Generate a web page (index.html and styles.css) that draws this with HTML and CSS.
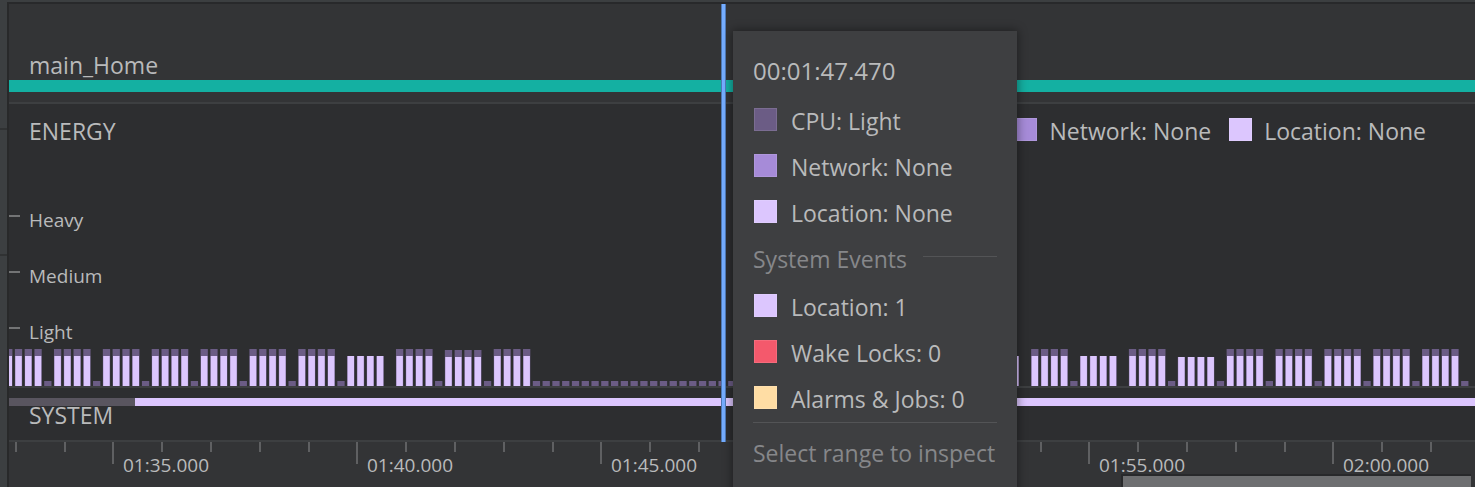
FILE: index.html
```html
<!DOCTYPE html>
<html lang="en">
<head>
<meta charset="utf-8">
<title>Energy profiler</title>
<link rel="stylesheet" href="styles.css">
</head>
<body>
<div class="profiler">
  <aside class="sessions"><div class="session"></div><div class="session"></div></aside>
  <main class="stage">
    <section class="events">
      <h2 class="label">main_Home</h2>
      <div class="activity"></div>
    </section>
    <section class="energy">
      <svg class="chart" id="chart" role="img" aria-label="Energy usage"></svg>
      <div class="overlay">
        <header class="head">
          <h2 class="label">ENERGY</h2>
          <ul class="legend">
            <li class="key"><span class="swatch network"></span>Network: None</li>
            <li class="key"><span class="swatch location"></span>Location: None</li>
          </ul>
        </header>
        <ul class="axis">
          <li class="level">Heavy</li>
          <li class="level">Medium</li>
          <li class="level">Light</li>
        </ul>
      </div>
    </section>
    <section class="system">
      <div class="track"><span class="idle"></span><span class="busy"></span></div>
      <h2 class="label">SYSTEM</h2>
    </section>
    <footer class="ruler">
      <svg class="ticks" id="ticks" aria-hidden="true"></svg>
      <div class="times" id="times"></div>
    </footer>
    <div class="cursor"></div>
    <div class="thumb"></div>
    <div class="tooltip" role="tooltip">
      <p class="stamp">00:01:47.470</p>
      <ul class="rows">
        <li class="row"><span class="swatch cpu"></span>CPU: Light</li>
        <li class="row"><span class="swatch network"></span>Network: None</li>
        <li class="row"><span class="swatch location"></span>Location: None</li>
      </ul>
      <h3 class="group">System Events</h3>
      <ul class="rows">
        <li class="row"><span class="swatch location"></span>Location: 1</li>
        <li class="row"><span class="swatch wake"></span>Wake Locks: 0</li>
        <li class="row"><span class="swatch alarm"></span>Alarms &amp; Jobs: 0</li>
      </ul>
      <p class="hint">Select range to inspect</p>
    </div>
  </main>
</div>
<script src="chart.js"></script>
</body>
</html>
```
FILE: styles.css
```css
* { box-sizing: border-box; }
body {
  margin: 0;
  background: #333436;
  color: #b9babb;
  font-family: "Open Sans", "Noto Sans", sans-serif;
  font-size: 23px;
  line-height: 32px;
}
h2, h3, p, ul { margin: 0; padding: 0; font-size: inherit; font-weight: 400; list-style: none; }
.profiler {
  display: flex;
  height: 100vh;
  overflow: hidden;
  border-top: 2px solid #3c3f41;
}
.sessions { width: 9px; flex: none; background: #3c3f41; border-right: 2px solid #28292a; }
.session { height: 126px; border-bottom: 2px solid #303233; }
.session:first-child { height: 128px; }
.stage {
  position: relative;
  flex: 1;
  min-width: 0;
  display: flex;
  flex-direction: column;
  border-top: 2px solid #28292b;
}
.label { padding-left: 20px; }
.events { padding-bottom: 10px; border-bottom: 2px solid #3d3f41; }
.events .label { height: 76px; padding-top: 45px; }
.activity { height: 12px; background: #14b0a2; }
.energy, .system, .ruler { display: grid; background: #2d2e30; }
.energy > *, .system > *, .ruler > * { grid-area: 1 / 1; min-width: 0; }
.energy { height: 284px; border-bottom: 2px solid #3d3f41; }
.chart { width: 100%; height: 282px; }
.head { display: flex; justify-content: space-between; padding: 11px 49px 0 0; }
.legend { display: flex; gap: 18px; }
.key, .row { display: flex; }
.key { gap: 12px; }
.swatch { width: 23px; height: 23px; margin-top: 3px; flex: none; border: 1px solid #ffffff1c; }
.cpu { background: #6b5c85; }
.network { background: #a68bd8; }
.location { background: #dcc6fe; }
.wake { background: #f4596c; }
.alarm { background: #ffdda4; }
.axis { display: grid; gap: 30px; padding-top: 60px; font-size: 19px; line-height: 26px; }
.level { display: flex; gap: 9px; }
.level::before { content: ""; width: 11px; height: 2px; margin-top: 8px; background: #737475; }
.system { height: 54px; border-bottom: 2px solid #3d3f41; }
.system .label { padding-top: 11px; }
.track { display: flex; height: 8px; margin-top: 10px; }
.idle { width: 126px; background: #59555f; }
.busy { flex: 1; background: #dcc6fe; }
.ruler { flex: 1; background: #333436; overflow: hidden; }
.ticks { width: 100%; height: 24px; }
.times { display: flex; padding: 10px 0 0 114px; font-size: 19px; line-height: 26px; overflow: hidden; }
.time { width: 244px; flex: none; }
.cursor {
  position: absolute;
  left: 712px;
  top: 0;
  width: 5px;
  height: 438px;
  background: #75adff;
  border: solid #4f79b5;
  border-width: 0 1px;
}
.thumb {
  position: absolute;
  right: 4px;
  bottom: 0;
  width: 350px;
  height: 13px;
  background: #6e6f71;
  border: solid #28292b;
  border-width: 2px 0 0 2px;
}
.tooltip {
  position: absolute;
  left: 724px;
  top: 27px;
  width: 284px;
  padding: 24px 20px 30px;
  background: #3e3f41;
  box-shadow: 0 0 9px 1px #00000066;
  white-space: nowrap;
}
.rows { display: grid; gap: 14px; }
.stamp { padding-bottom: 18px; font-size: 24px; }
.row { gap: 14px; padding-left: 1px; }
.group { display: flex; gap: 16px; padding: 14px 0 16px; color: #86878a; }
.group::after { content: ""; flex: 1; height: 1px; margin-top: 13px; background: #535456; }
.hint { margin-top: 7px; padding-top: 14px; border-top: 1px solid #535456; color: #86878a; }
```
FILE: chart.js
```js
const NS = "http://www.w3.org/2000/svg";

function rect(svg, x, y, width, height, fill) {
  const node = document.createElementNS(NS, "rect");
  Object.entries({ x, y, width, height, fill }).forEach(([k, v]) => node.setAttribute(k, v));
  svg.append(node);
}

// One group per second, five samples each:
// F = CPU + location then CPU only, L = location then nothing,
// M = location then CPU only, S = CPU only
const groups = "FFFFFFFLFFFSSSSSSSSSLFLFMFFFFF";
const lower = new Set([9, 24]);
const second = 48.86;
const base = 282;
const chart = document.getElementById("chart");

[...groups].forEach((kind, g) => {
  for (let i = 0; i < 5; i++) {
    const x = -3.9 + g * second + i * second / 5;
    if (kind === "S" || i === 4) {
      if (kind !== "L") rect(chart, x, base - 5, 7.3, 5, "#6b5c85");
      continue;
    }
    const drop = lower.has(g) ? 1 : 0;
    const top = kind === "F" ? 37 : 30;
    rect(chart, x, base - top + drop, 7.3, top - drop, "#6b5c85");
    rect(chart, x + 0.4, base - 30 + drop, 6.5, 30 - drop, "#dcc6fe");
  }
});

const ticks = document.getElementById("ticks");
for (let s = -2; s < 28; s++) {
  rect(ticks, Math.round(103.4 + s * 48.8), 0, 2, s % 5 ? 10 : 22, "#5f6062");
}

// The label under the tooltip stays blank.
const hidden = 110;
const times = document.getElementById("times");
for (let t = 95; t <= 120; t += 5) {
  const label = document.createElement("span");
  label.className = "time";
  if (t !== hidden) {
    label.textContent = `0${Math.floor(t / 60)}:${String(t % 60).padStart(2, "0")}.000`;
  }
  times.append(label);
}
```
